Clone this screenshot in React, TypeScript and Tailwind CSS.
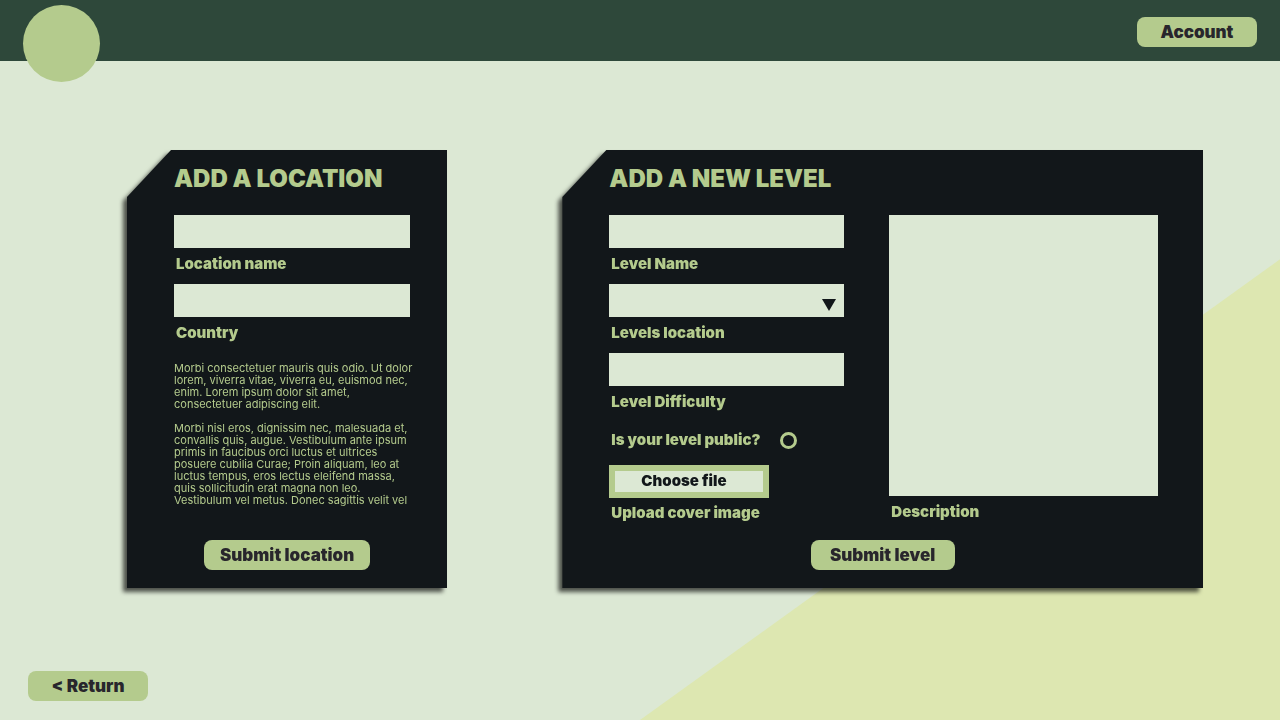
import type { ReactNode } from "react";

const heavy = "font-['Inter','Liberation_Sans',sans-serif] font-black";

function Panel({ title, children }: { title: string; children: ReactNode }) {
  return (
    <section className="flex min-w-0 drop-shadow-[-4px_4px_2px_rgba(0,0,0,0.65)]">
      <div className="flex min-w-0 flex-1 flex-col bg-[#12171a] pt-[15px] pr-[37px] pb-[18px] pl-[47px] [clip-path:polygon(44px_0,100%_0,100%_100%,0_100%,0_47px)]">
        <h2 className={`${heavy} text-2xl leading-7 whitespace-nowrap text-[#b4cb8d]`}>{title}</h2>
        {children}
      </div>
    </section>
  );
}

function Label({ id, children }: { id: string; children: ReactNode }) {
  return (
    <label htmlFor={id} className={`${heavy} pl-0.5 text-[15px] leading-5 whitespace-nowrap text-[#b4cb8d]`}>
      {children}
    </label>
  );
}

const box = "w-full appearance-none rounded-none bg-[#dce8d4] px-2 text-sm text-[#12171a] outline-none";

function TextField({ id, label }: { id: string; label: string }) {
  return (
    <div className="flex flex-col gap-1.5">
      <input id={id} type="text" className={`${box} h-[33px]`} />
      <Label id={id}>{label}</Label>
    </div>
  );
}

function Button({ children, size }: { children: ReactNode; size: string }) {
  return (
    <button type="button" className={`${heavy} ${size} h-[30px] rounded-lg bg-[#b4cb8d] text-[17px] leading-5 whitespace-nowrap text-[#28262c]`}>
      {children}
    </button>
  );
}

export default function App() {
  return (
    <div className="relative isolate flex min-h-screen flex-col bg-[#dce8d4]">
      <div className="absolute inset-0 -z-10 bg-[#dde7b1] [clip-path:polygon(50%_100%,100%_36%,100%_100%)]" />

      <header className="flex h-[61px] items-start justify-between bg-[#2e483a] pr-[23px] pl-[23px]">
        <a href="#home" aria-label="Home" className="mt-[5px] size-[77px] shrink-0 rounded-full bg-[#b4cb8d]" />
        <div className="flex pt-[17px]">
          <Button size="w-[120px]">Account</Button>
        </div>
      </header>

      <main className="grid flex-1 grid-cols-[minmax(0,1fr)_minmax(0,2fr)] content-start gap-[115px] pt-[89px] pr-[77px] pb-8 pl-[127px]">
        <Panel title="ADD A LOCATION">
          <form className="flex flex-1 flex-col pt-[22px]">
            <div className="flex flex-col gap-2.5">
              <TextField id="location-name" label="Location name" />
              <TextField id="country" label="Country" />
            </div>
            <div className="flex flex-col gap-3 pt-[19px] font-['Inter','Liberation_Sans',sans-serif] text-[11px] leading-3 whitespace-pre text-[#b4cb8d]">
              <p>{`Morbi consectetuer mauris quis odio. Ut dolor
lorem, viverra vitae, viverra eu, euismod nec,
enim. Lorem ipsum dolor sit amet,
consectetuer adipiscing elit.`}</p>
              <p>{`Morbi nisl eros, dignissim nec, malesuada et,
convallis quis, augue. Vestibulum ante ipsum
primis in faucibus orci luctus et ultrices
posuere cubilia Curae; Proin aliquam, leo at
luctus tempus, eros lectus eleifend massa,
quis sollicitudin erat magna non leo.
Vestibulum vel metus. Donec sagittis velit vel`}</p>
            </div>
            <div className="mt-auto -mr-[37px] -ml-[47px] flex justify-center">
              <Button size="w-[166px]">Submit location</Button>
            </div>
          </form>
        </Panel>

        <Panel title="ADD A NEW LEVEL">
          <form className="flex flex-1 flex-col pt-[22px]">
            <div className="flex gap-[45px] pr-2">
              <div className="flex w-[235px] shrink-0 flex-col">
                <div className="flex flex-col gap-2.5">
                  <TextField id="level-name" label="Level Name" />
                  <div className="flex flex-col gap-1.5">
                    <div className="relative flex">
                      <select id="levels-location" className={`${box} h-[33px]`} />
                      <svg viewBox="0 0 14 12" className="pointer-events-none absolute right-2 bottom-1.5 h-3 w-3.5" aria-hidden="true">
                        <path d="M0 0H14L7 12Z" fill="#12171a" />
                      </svg>
                    </div>
                    <Label id="levels-location">Levels location</Label>
                  </div>
                  <TextField id="level-difficulty" label="Level Difficulty" />
                </div>
                <div className="flex items-center gap-5 pt-[18px] pb-[15px]">
                  <Label id="public">Is your level public?</Label>
                  <input
                    id="public"
                    type="radio"
                    className="size-[17px] appearance-none rounded-full border-3 border-[#b4cb8d] checked:bg-[#b4cb8d]"
                  />
                </div>
                <label
                  className={`${heavy} flex h-[33px] w-40 items-center border-6 border-[#b4cb8d] bg-[#dce8d4] pl-[26px] text-[15px] text-[#12171a]`}
                >
                  Choose file
                  <input id="cover" type="file" className="sr-only" />
                </label>
                <div className="flex pt-[5px]">
                  <Label id="cover">Upload cover image</Label>
                </div>
              </div>
              <div className="flex min-w-0 flex-1 flex-col gap-1.5">
                <textarea id="description" className={`${box} h-[281px] resize-none py-2`} />
                <Label id="description">Description</Label>
              </div>
            </div>
            <div className="-mr-[37px] -ml-[47px] flex justify-center pt-[17px]">
              <Button size="w-36">Submit level</Button>
            </div>
          </form>
        </Panel>
      </main>

      <footer className="flex pb-[19px] pl-7">
        <Button size="w-[120px]">&lt; Return</Button>
      </footer>
    </div>
  );
}
